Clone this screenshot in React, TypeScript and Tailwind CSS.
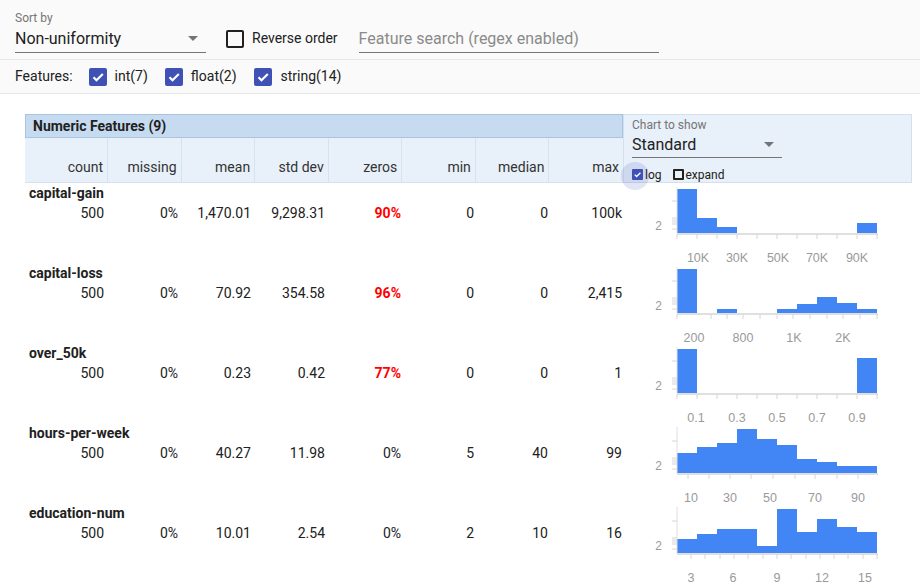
import React from "react";

type Row = {
  name: string;
  values: string[];
  zerosRed: boolean;
};

type ChartSpec = {
  bars: (number | null)[];
  ticks: number[];
  labels: { x: number; text: string }[];
};

const rows: Row[] = [
  { name: "capital-gain", values: ["500", "0%", "1,470.01", "9,298.31", "90%", "0", "0", "100k"], zerosRed: true },
  { name: "capital-loss", values: ["500", "0%", "70.92", "354.58", "96%", "0", "0", "2,415"], zerosRed: true },
  { name: "over_50k", values: ["500", "0%", "0.23", "0.42", "77%", "0", "0", "1"], zerosRed: true },
  { name: "hours-per-week", values: ["500", "0%", "40.27", "11.98", "0%", "5", "40", "99"], zerosRed: false },
  { name: "education-num", values: ["500", "0%", "10.01", "2.54", "0%", "2", "10", "16"], zerosRed: false },
];

const every20 = [54, 74, 94, 114, 134, 154, 174, 194, 214, 234, 254];

const charts: ChartSpec[] = [
  {
    bars: [6, 35, 44, null, null, null, null, null, null, 40],
    ticks: every20,
    labels: [
      { x: 75, text: "10K" },
      { x: 114, text: "30K" },
      { x: 155, text: "50K" },
      { x: 194, text: "70K" },
      { x: 234, text: "90K" },
    ],
  },
  {
    bars: [6, null, 46, null, null, 46, 41, 34, 40, 46],
    ticks: [54, 88, 104, 120, 137, 154, 170, 187, 204, 220, 237, 254],
    labels: [
      { x: 71, text: "200" },
      { x: 120, text: "800" },
      { x: 171, text: "1K" },
      { x: 220, text: "2K" },
    ],
  },
  {
    bars: [6, null, null, null, null, null, null, null, null, 15],
    ticks: every20,
    labels: [
      { x: 73, text: "0.1" },
      { x: 114, text: "0.3" },
      { x: 154, text: "0.5" },
      { x: 194, text: "0.7" },
      { x: 234, text: "0.9" },
    ],
  },
  {
    bars: [30, 24, 20, 6, 16, 22, 36, 39, 43, 43],
    ticks: [65, 86, 107, 128, 150, 172, 192, 214, 235],
    labels: [
      { x: 68, text: "10" },
      { x: 107, text: "30" },
      { x: 147, text: "50" },
      { x: 192, text: "70" },
      { x: 235, text: "90" },
    ],
  },
  {
    bars: [36, 31, 26, 26, 43, 6, 29, 16, 24, 29],
    ticks: [68, 82, 97, 111, 125, 140, 154, 168, 183, 197, 211, 225, 240, 254],
    labels: [
      { x: 68, text: "3" },
      { x: 110, text: "6" },
      { x: 154, text: "9" },
      { x: 199, text: "12" },
      { x: 242, text: "15" },
    ],
  },
];

const headers = ["count", "missing", "mean", "std dev", "zeros", "min", "median", "max"];

function CheckMark({ size }: { size: number }) {
  return (
    <svg width={size} height={size} viewBox="0 0 18 18">
      <path d="M4.5 9.2l3 3L13.8 6" fill="none" stroke="white" strokeWidth="2.2" />
    </svg>
  );
}

function Checked() {
  return (
    <div className="w-[18px] h-[18px] rounded-[2px] bg-[#3f51b5] flex items-center justify-center">
      <CheckMark size={18} />
    </div>
  );
}

function Arrow() {
  return (
    <svg width="10" height="5" viewBox="0 0 10 5">
      <path d="M0 0h10L5 5z" fill="#757575" />
    </svg>
  );
}

function Histogram({ spec }: { spec: ChartSpec }) {
  return (
    <svg width="297" height="80" className="block overflow-visible">
      {spec.bars.map((top, i) =>
        top === null ? null : (
          <rect key={i} x={54 + i * 20} y={top} width="20" height={50 - top} fill="#4285f4" />
        )
      )}
      <line x1="54" y1="4" x2="54" y2="51" stroke="#e0e0e0" strokeWidth="1" />
      {[18, 35, 37, 39, 41, 46].map((y) => (
        <line key={y} x1="49" y1={y} x2="54" y2={y} stroke="#d6d6d6" strokeWidth="1" />
      ))}
      <text x="39" y="47" textAnchor="end" fontSize="12" fill="#9a9a9a" fontFamily="'Liberation Sans', Arial, sans-serif">
        2
      </text>
      <line x1="54" y1="51" x2="255" y2="51" stroke="#e0e0e0" strokeWidth="2" />
      {spec.ticks.map((x) => (
        <line key={x} x1={x} y1="51" x2={x} y2="56" stroke="#d6d6d6" strokeWidth="1" />
      ))}
      {spec.labels.map((l) => (
        <text
          key={l.text}
          x={l.x}
          y="79"
          textAnchor="middle"
          fontSize="12.5"
          fill="#9a9a9a"
          fontFamily="'Liberation Sans', Arial, sans-serif"
        >
          {l.text}
        </text>
      ))}
    </svg>
  );
}

export default function App() {
  return (
    <div
      className="relative w-[920px] h-[586px] overflow-hidden bg-white text-[#212121]"
      style={{ fontFamily: "Roboto, 'Liberation Sans', sans-serif" }}
    >
      <div className="bg-[#fafafa]">
        <div className="h-[60px] flex items-start border-b border-[#e6e6e6] pl-[15px]">
          <div className="w-[191px] pt-[11px]">
            <div className="text-[12px] leading-[14px] text-[#757575]">Sort by</div>
            <div className="h-[28px] border-b border-[#757575] flex items-center justify-between pr-[8px]">
              <span className="text-[16px]">Non-uniformity</span>
              <Arrow />
            </div>
          </div>
          <div className="ml-[20px] mt-[25px] h-[27px] flex items-center gap-[8px]">
            <div className="w-[18px] h-[18px] rounded-[2px] border-2 border-[#212121]" />
            <span className="text-[14px]">Reverse order</span>
          </div>
          <div className="ml-[21px] mt-[25px] w-[300px] h-[28px] border-b border-[#757575] flex items-center">
            <span className="text-[16px] text-[#8a8a8a]">Feature search (regex enabled)</span>
          </div>
        </div>
        <div className="h-[34px] flex items-center pl-[15px] border-b border-[#e6e6e6] text-[14px]">
          <span>Features:</span>
          <div className="ml-[16px] flex items-center gap-[8px]">
            <Checked />
            <span>int(7)</span>
          </div>
          <div className="ml-[17px] flex items-center gap-[8px]">
            <Checked />
            <span>float(2)</span>
          </div>
          <div className="ml-[17px] flex items-center gap-[9px]">
            <Checked />
            <span>string(14)</span>
          </div>
        </div>
      </div>

      <div className="flex pt-[20px]">
        <div className="ml-[25px] w-[598px]">
          <div className="h-[24px] bg-[#c6dbf0] border border-[#a9c4e0] flex items-center pl-[7px] text-[14px] font-bold">
            Numeric Features (9)
          </div>
          <div className="h-[45px] bg-[#e8f0f9] border-b border-[#d6e2f0] grid grid-cols-[83px_repeat(7,1fr)] text-[14px] text-[#333]">
            {headers.map((h, i) => (
              <div
                key={h}
                className={
                  i < 7
                    ? "border-r border-[#d6e2f0] flex items-end justify-end pr-[4px] pb-[4px]"
                    : "flex items-end justify-end pr-[4px] pb-[4px]"
                }
              >
                {h}
              </div>
            ))}
          </div>
          {rows.map((r) => (
            <div key={r.name} className="h-[80px]">
              <div className="h-[19px] pt-[2px] leading-[17px] pl-[4px] text-[14px] font-bold">{r.name}</div>
              <div className="h-[23px] leading-[23px] grid grid-cols-[79px_74px_73px_74px_76px_73px_74px_74px] text-[14px] text-right">
                {r.values.map((v, i) => (
                  <div key={i} className={i === 4 && r.zerosRed ? "text-[#ff0000] font-bold" : ""}>
                    {v}
                  </div>
                ))}
              </div>
            </div>
          ))}
        </div>

        <div className="w-[297px]">
          <div className="relative w-[289px] h-[69px] bg-[#e8f0f9] border border-[#d3e0ee] pl-[8px] pt-[3px]">
            <div className="text-[12px] leading-[14px] text-[#757575]">Chart to show</div>
            <div className="w-[150px] h-[26px] border-b border-[#757575] flex items-center justify-between pr-[8px]">
              <span className="text-[16px]">Standard</span>
              <Arrow />
            </div>
            <div className="mt-[11px] h-[11px] flex items-center text-[12px]">
              <div className="absolute left-[-3px] top-[47px] w-[28px] h-[28px] rounded-full bg-[#3f51b5]/15" />
              <div className="relative w-[11px] h-[11px] rounded-[1px] bg-[#3f51b5] flex items-center justify-center">
                <CheckMark size={11} />
              </div>
              <span className="relative ml-[2px]">log</span>
              <div className="ml-[11px] w-[11px] h-[11px] rounded-[1px] border-2 border-[#212121]" />
              <span className="ml-[2px]">expand</span>
            </div>
          </div>
          {charts.map((c, i) => (
            <div key={i} className="h-[80px]">
              <Histogram spec={c} />
            </div>
          ))}
        </div>
      </div>
    </div>
  );
}
